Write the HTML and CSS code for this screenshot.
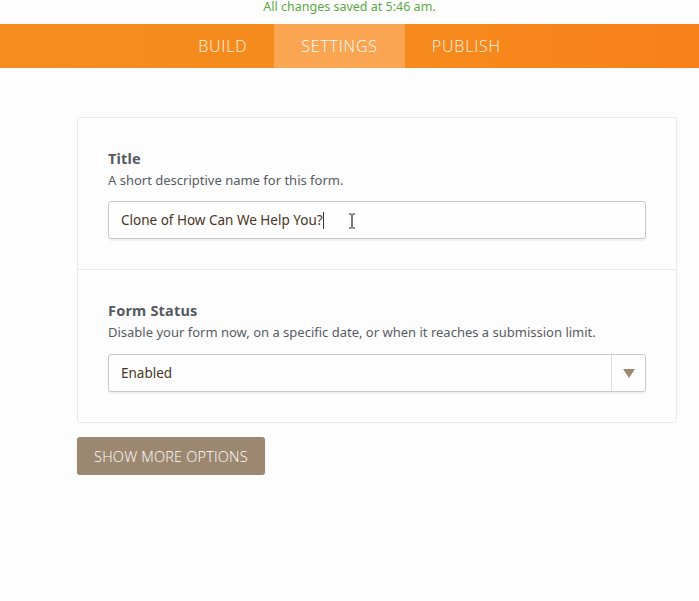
FILE: index.html
```html
<!DOCTYPE html>
<html>
<head>
<meta charset="utf-8">
<link rel="stylesheet" href="styles.css">
</head>
<body>
<div class="status">All changes saved at 5:46 am.</div>
<nav class="nav">
  <a class="tab">BUILD</a>
  <a class="tab active">SETTINGS</a>
  <a class="tab">PUBLISH</a>
</nav>
<main class="main">
  <div class="card">
    <section class="section">
      <div class="label">Title</div>
      <div class="desc">A short descriptive name for this form.</div>
      <div class="field">
        <span class="value">Clone of How Can We Help You?</span><span class="caret"></span>
        <svg class="ibeam" width="8" height="16" viewBox="0 0 8 16"><path d="M1 1h2.5M4.5 1H7M4 1.5v13M1 15h2.5M4.5 15H7" stroke="#222" stroke-width="1.2" fill="none"/></svg>
      </div>
    </section>
    <section class="section">
      <div class="label">Form Status</div>
      <div class="desc">Disable your form now, on a specific date, or when it reaches a submission limit.</div>
      <div class="field select">
        <span class="value">Enabled</span>
        <span class="arrow"><svg width="12" height="9" viewBox="0 0 12 9"><path d="M0 0h12L6 9z" fill="#9c8a70"/></svg></span>
      </div>
    </section>
  </div>
  <button class="more">SHOW MORE OPTIONS</button>
</main>
</body>
</html>
```
FILE: styles.css
```css
html, body {
  margin: 0;
  padding: 0;
  background: #fdfdfd;
  font-family: "Noto Sans", "Open Sans", sans-serif;
}
.status {
  height: 24px;
  line-height: 13px;
  text-align: center;
  font-size: 12.5px;
  color: #5caa45;
}
.nav {
  height: 44px;
  display: flex;
  justify-content: center;
  background: linear-gradient(90deg, #f68c1e 0%, #f68a1c 60%, #f8801a 100%);
}
.tab {
  display: flex;
  align-items: center;
  padding: 0 27px;
  color: #fff4e6;
  font-family: "Open Sans", sans-serif;
  font-weight: 300;
  font-size: 16px;
  letter-spacing: 0.8px;
}
.tab.active {
  background: #f9a552;
  color: #fff;
}
.main {
  padding: 49px 0 0 77px;
}
.card {
  width: 598px;
  border: 1px solid #ebebeb;
  border-radius: 3px;
  background: #fdfdfd;
}
.section {
  padding: 30px 30px 30px 30px;
}
.section + .section {
  border-top: 1px solid #ebebeb;
}
.label {
  font-size: 14.5px;
  font-weight: 700;
  line-height: 20px;
  color: #545a60;
  letter-spacing: 0.2px;
}
.desc {
  margin-top: 2px;
  font-size: 13px;
  line-height: 20px;
  color: #575c63;
}
.field {
  position: relative;
  margin-top: 11px;
  height: 36px;
  border: 1px solid #c9c9c9;
  border-radius: 3px;
  background: #fefefe;
  box-shadow: 0 2px 1px rgba(0,0,0,0.05);
  display: flex;
  align-items: center;
  padding-left: 12px;
}
.select {
  margin-top: 12px;
}
.value {
  font-size: 13.5px;
  color: #4a3523;
}
.caret {
  display: inline-block;
  width: 1px;
  height: 17px;
  background: #333;
}
.ibeam {
  position: absolute;
  left: 239px;
  top: 11px;
}
.arrow {
  margin-left: auto;
  width: 33px;
  height: 36px;
  border-left: 1px solid #e2ddd6;
  display: flex;
  align-items: center;
  justify-content: center;
}
.more {
  margin-top: 14px;
  width: 188px;
  height: 38px;
  border: none;
  border-radius: 3px;
  background: #9c8870;
  color: #fff;
  font-family: "Open Sans", sans-serif;
  font-weight: 300;
  font-size: 14.5px;
  letter-spacing: 0.2px;
  box-shadow: 0 2px 3px rgba(0,0,0,0.08);
  padding: 0;
}
```
